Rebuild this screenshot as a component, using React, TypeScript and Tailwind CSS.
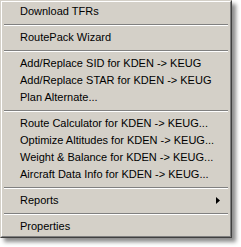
import { ReactNode } from "react";

type Entry =
  | { kind: "item"; label: string; submenu?: boolean }
  | { kind: "sep" };

const entries: Entry[] = [
  { kind: "item", label: "Download TFRs" },
  { kind: "sep" },
  { kind: "item", label: "RoutePack Wizard" },
  { kind: "sep" },
  { kind: "item", label: "Add/Replace SID for KDEN -> KEUG" },
  { kind: "item", label: "Add/Replace STAR for KDEN -> KEUG" },
  { kind: "item", label: "Plan Alternate..." },
  { kind: "sep" },
  { kind: "item", label: "Route Calculator for KDEN -> KEUG..." },
  { kind: "item", label: "Optimize Altitudes for KDEN -> KEUG..." },
  { kind: "item", label: "Weight & Balance for KDEN -> KEUG..." },
  { kind: "item", label: "Aircraft Data Info for KDEN -> KEUG..." },
  { kind: "sep" },
  { kind: "item", label: "Reports", submenu: true },
  { kind: "sep" },
  { kind: "item", label: "Properties" },
];

function MenuItem({ label, submenu }: { label: string; submenu?: boolean }): ReactNode {
  return (
    <div className="h-[17px] flex items-center pl-[17px] pr-[8px] text-black">
      <span className="flex-1 whitespace-nowrap leading-none">{label}</span>
      {submenu && (
        <svg width="4" height="7" viewBox="0 0 4 7" className="mr-[1px]">
          <path d="M0 0 L4 3.5 L0 7 Z" fill="#000" />
        </svg>
      )}
    </div>
  );
}

function Separator() {
  return (
    <div className="h-[9px] flex flex-col justify-center px-[1px]">
      <div className="h-px bg-[#808080]" />
      <div className="h-px bg-white" />
    </div>
  );
}

export default function App() {
  return (
    <div className="w-[241px] h-[247px] bg-white font-['Liberation_Sans',Arial,sans-serif] text-[11px]">
      <div className="w-[232px] border border-t-[#d4d0c8] border-l-[#d4d0c8] border-r-[#404040] border-b-[#404040] bg-[#d4d0c8] shadow-[4px_4px_4px_rgba(0,0,0,0.45)]">
        <div className="border border-t-white border-l-white border-r-[#808080] border-b-[#808080] p-px">
          {entries.map((e, i) =>
            e.kind === "sep" ? (
              <Separator key={i} />
            ) : (
              <MenuItem key={i} label={e.label} submenu={e.submenu} />
            )
          )}
        </div>
      </div>
    </div>
  );
}
